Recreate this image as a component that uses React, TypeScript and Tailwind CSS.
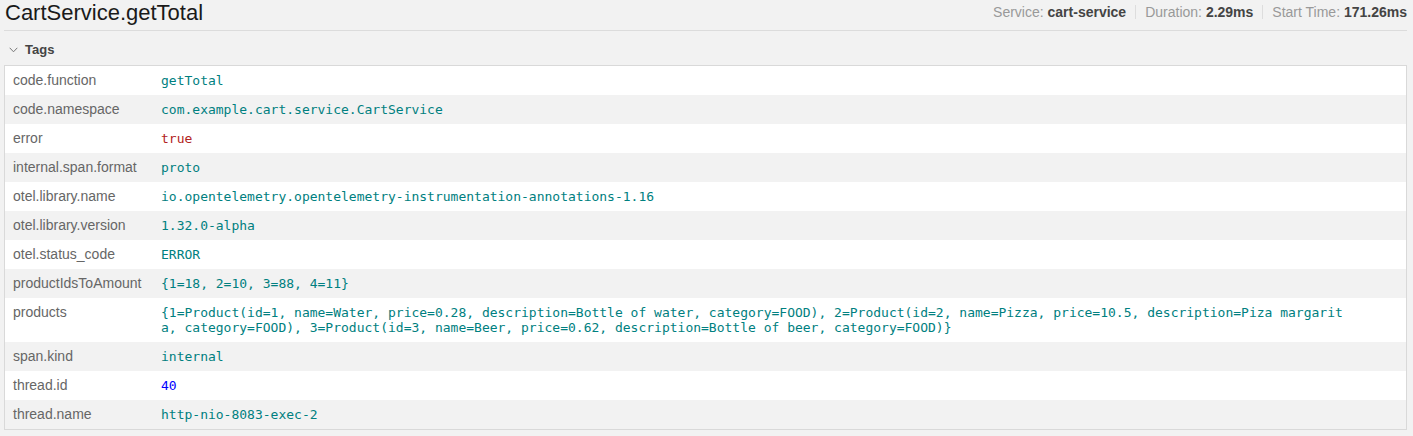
import React from 'react';

// tag value kinds map to the json-markup colours
type Tag = { key: string; value: string; kind?: 'string' | 'bool' | 'number' };

const TAGS: Tag[] = [
  { key: 'code.function', value: 'getTotal' },
  { key: 'code.namespace', value: 'com.example.cart.service.CartService' },
  { key: 'error', value: 'true', kind: 'bool' },
  { key: 'internal.span.format', value: 'proto' },
  { key: 'otel.library.name', value: 'io.opentelemetry.opentelemetry-instrumentation-annotations-1.16' },
  { key: 'otel.library.version', value: '1.32.0-alpha' },
  { key: 'otel.status_code', value: 'ERROR' },
  { key: 'productIdsToAmount', value: '{1=18, 2=10, 3=88, 4=11}' },
  {
    key: 'products',
    value:
      '{1=Product(id=1, name=Water, price=0.28, description=Bottle of water, category=FOOD), 2=Product(id=2, name=Pizza, price=10.5, description=Piza margarita, category=FOOD), 3=Product(id=3, name=Beer, price=0.62, description=Bottle of beer, category=FOOD)}',
  },
  { key: 'span.kind', value: 'internal' },
  { key: 'thread.id', value: '40', kind: 'number' },
  { key: 'thread.name', value: 'http-nio-8083-exec-2' },
];

const valueColor = {
  string: 'text-[#008080]',
  bool: 'text-[#b22222]',
  number: 'text-[#0000ff]',
};

export default function App() {
  return (
    <div className="min-h-[436px] bg-[#f2f2f2] pl-[4px] pr-[6px] font-['Liberation_Sans',Arial,sans-serif]">
      {/* header */}
      <div className="flex h-[31px] items-start justify-between border-b border-[#dcdcdc]">
        <h1 className="pl-[1px] text-[22px] leading-[25px] text-[#1a1a1a]">CartService.getTotal</h1>
        <div className="flex items-center pt-[4px] text-[14px] leading-[16px] text-[#999]">
          <MetaItem label="Service:" value="cart-service" />
          <Sep />
          <MetaItem label="Duration:" value="2.29ms" />
          <Sep />
          <MetaItem label="Start Time:" value="171.26ms" />
        </div>
      </div>

      {/* tags toggle */}
      <div className="flex h-[34px] items-center gap-[7px] pl-[5px] pt-[3px]">
        <svg width="9" height="6" viewBox="0 0 9 6" className="text-[#777]">
          <path d="M0.7 0.8 L4.5 4.8 L8.3 0.8" fill="none" stroke="currentColor" strokeWidth="1" />
        </svg>
        <span className="text-[13px] font-bold text-[#444]">Tags</span>
      </div>

      {/* key/value table */}
      <div className="border border-[#d9d9d9] bg-white">
        {TAGS.map((t, i) => (
          <div key={t.key} className={`flex py-[7px] ${i % 2 === 1 ? 'bg-[#f2f2f2]' : 'bg-white'}`}>
            <div className="w-[148px] shrink-0 pl-[8px] text-[14px] leading-[15px] text-[#666]">{t.key}</div>
            <div
              className={`min-w-0 flex-1 break-all whitespace-pre-wrap pl-[8px] pr-[59px] font-['DejaVu_Sans_Mono',monospace] text-[13px] leading-[15px] ${valueColor[t.kind ?? 'string']}`}
            >
              {t.value}
            </div>
          </div>
        ))}
      </div>
    </div>
  );
}

function MetaItem({ label, value }: { label: string; value: string }) {
  return (
    <span>
      {label} <strong className="font-bold text-[#444]">{value}</strong>
    </span>
  );
}

function Sep() {
  return <span className="mx-[9px] h-[14px] w-px bg-[#ddd]" />;
}
